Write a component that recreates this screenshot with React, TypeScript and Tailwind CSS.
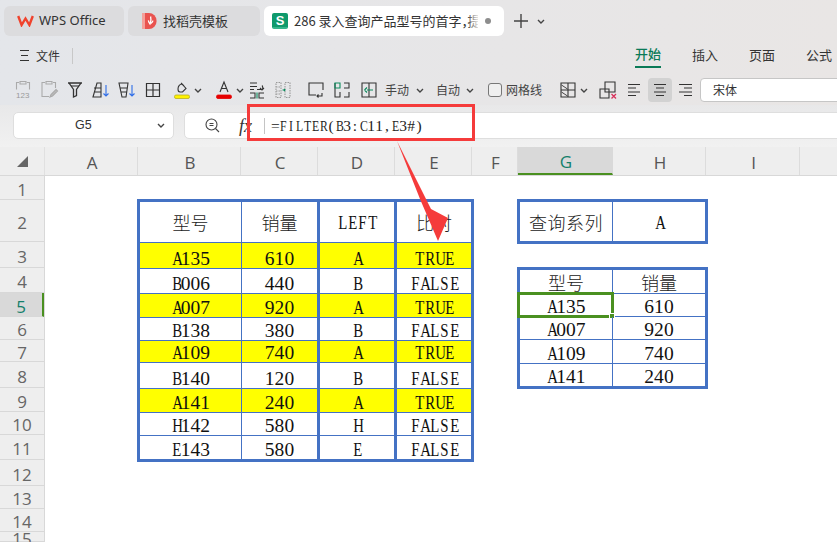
const cjk = { fontFamily: '"Noto Sans CJK SC", sans-serif' };

const columns = [
  { name: "A", width: 93 },
  { name: "B", width: 103 },
  { name: "C", width: 77 },
  { name: "D", width: 77 },
  { name: "E", width: 77 },
  { name: "F", width: 46 },
  { name: "G", width: 95, active: true },
  { name: "H", width: 93 },
  { name: "I", width: 94 },
  { name: "", width: 80 },
];

const rowHeights = [24, 42, 26, 25, 24, 23, 22, 26, 24, 23, 25, 26, 23, 23, 10];

const mainRows = [
  { h: 26, hit: true, cells: ["A135", "610", "A", "TRUE"] },
  { h: 25, hit: false, cells: ["B006", "440", "B", "FALSE"] },
  { h: 24, hit: true, cells: ["A007", "920", "A", "TRUE"] },
  { h: 23, hit: false, cells: ["B138", "380", "B", "FALSE"] },
  { h: 22, hit: true, cells: ["A109", "740", "A", "TRUE"] },
  { h: 26, hit: false, cells: ["B140", "120", "B", "FALSE"] },
  { h: 24, hit: true, cells: ["A141", "240", "A", "TRUE"] },
  { h: 23, hit: false, cells: ["H142", "580", "H", "FALSE"] },
  { h: 23, hit: false, cells: ["E143", "580", "E", "FALSE"] },
];

const resultRows = [
  { h: 23, cells: ["A135", "610"], selected: true },
  { h: 23, cells: ["A007", "920"] },
  { h: 24, cells: ["A109", "740"] },
  { h: 22, cells: ["A141", "240"] },
];

const mainCols = [
  "w-[102px] border-r border-[#4472c4]",
  "w-[78px] border-r-[3px] border-[#4472c4]",
  "w-[77px] border-r-[3px] border-[#4472c4]",
  "w-[74px]",
];

// the sheet font is half-width: every glyph sits in a fixed box, capitals squeezed to fit
function Fixed({ text, box }: { text: string; box: string }) {
  return (
    <span className="inline-flex font-['Liberation_Serif',serif] leading-none">
      {text.split("").map((ch, i) => (
        <span key={i} className={"inline-block text-center " + box + (/[A-Z]/.test(ch) ? " scale-x-[0.76]" : "")}>
          {ch}
        </span>
      ))}
    </span>
  );
}

function Latin({ children }: { children: string }) {
  return (
    <span className="text-[19.5px] leading-none text-[#111]">
      <Fixed text={children} box="w-[9.8px]" />
    </span>
  );
}

function Han({ children }: { children: string }) {
  return (
    <span style={cjk} className="text-[18px] font-light leading-none text-[#222]">
      {children}
    </span>
  );
}

function Icon({ children, className = "" }: { children: React.ReactNode; className?: string }) {
  return (
    <span className={"flex h-6 w-[26px] shrink-0 items-center justify-center " + className}>
      <svg width="20" height="20" viewBox="0 0 20 20" fill="none" stroke="#333" strokeWidth="1.1">
        {children}
      </svg>
    </span>
  );
}

function Chevron({ className = "" }: { className?: string }) {
  return (
    <span className={"flex w-[10px] shrink-0 justify-center " + className}>
      <svg width="8" height="5" viewBox="0 0 8 5" fill="none" stroke="#444" strokeWidth="1.4">
        <path d="M1 1l3 3 3-3" />
      </svg>
    </span>
  );
}

function Tab({ children, className }: { children: React.ReactNode; className: string }) {
  return <div className={"flex h-[30px] shrink-0 items-center rounded-[6px] " + className}>{children}</div>;
}

export default function App() {
  return (
    <div style={cjk} className="relative flex h-screen w-screen flex-col overflow-hidden bg-white">
      <div className="h-[105px] shrink-0 bg-gradient-to-r from-[#e4e6ea] to-[#e9e6e5]">
        {/* tabs */}
        <div className="flex h-[42px] items-start gap-1 pl-1 pt-[6px] text-[13px] text-[#333]">
          <Tab className="w-[120px] bg-[#dcdcde] pl-[13px]">
            <svg width="17" height="12" viewBox="0 0 17 12" fill="none" stroke="#f0432d" strokeWidth="2.4">
              <path d="M1.2 1l3.4 9 3.9-6.5 3.9 6.5 3.4-9" />
            </svg>
            <span className="ml-[5px] font-['Noto_Sans',sans-serif]">WPS Office</span>
          </Tab>
          <Tab className="w-[132px] bg-[#dcdcde] pl-[14px]">
            <svg width="15" height="16" viewBox="0 0 15 16">
              <path d="M0 0h7a7.6 8 0 0 1 0 16H0z" fill="#e9534f" />
              <path d="M0 0h3v16H0z" fill="#f4a09a" />
              <path d="M8.6 3.5c.8 2.4.4 4.6-.6 7.5-.9-1-1.7-2.5-1.5-3.7M8.8 10.5c1-.6 1.9-1.6 2.2-2.8" fill="none" stroke="#fff" strokeWidth="1.3" />
            </svg>
            <span className="ml-[6px]">找稻壳模板</span>
          </Tab>
          <Tab className="relative w-[240px] bg-white pl-2">
            <span className="relative flex h-4 w-4 shrink-0 items-center justify-center rounded-[2px] border-b-2 border-[#35b58b] bg-[#0f9a6c] font-['Liberation_Sans',sans-serif] text-[13px] font-bold leading-none text-white">
              S
            </span>
            <span className="ml-[6px] w-[184px] overflow-hidden whitespace-nowrap text-[13px]">
              286 录入查询产品型号的首字<span className="tracking-[-7px]">，</span>提
            </span>
            <span className="absolute left-[203px] top-0 h-full w-[13px] bg-gradient-to-r from-transparent to-white" />
            <span className="ml-[7px] h-[6px] w-[6px] rounded-full bg-[#8d8d8d]" />
          </Tab>
          <div className="ml-[6px] flex h-[30px] items-center">
            <svg width="14" height="14" viewBox="0 0 14 14" stroke="#444" strokeWidth="1.4">
              <path d="M7 0v14M0 7h14" />
            </svg>
            <Chevron className="ml-[8px]" />
          </div>
        </div>

        {/* menu row */}
        <div className="flex h-[33px] text-[13px] text-[#333]">
          <div className="flex h-[27px] items-center pl-[20px]">
            <svg width="9" height="11" viewBox="0 0 9 11" stroke="#333" strokeWidth="1">
              <path d="M0 .5h9M1 5.5h7M0 10.5h9" />
            </svg>
            <span className="ml-[7px] text-[12px]">文件</span>
            <span className="ml-3 h-4 w-px bg-[#c8c8c8]" />
          </div>
          <div className="ml-auto flex gap-[31px] pr-[5px]">
            <div className="flex h-[26px] flex-col items-center justify-center border-b-2 border-[#0a7a57] font-medium text-[#0a7a57]">
              开始
            </div>
            <div className="flex h-[26px] items-center">插入</div>
            <div className="flex h-[26px] items-center">页面</div>
            <div className="flex h-[26px] items-center">公式</div>
          </div>
        </div>

        {/* toolbar */}
        <div className="flex h-[30px] items-center pl-[10px] text-[12px] text-[#444]">
          <Icon>
            <g stroke="#aaa">
              <path d="M6 2.5H3.5v7M14 2.5h2.500v7M7 1.500h6v2.500H7z" />
              <text x="3" y="18" fontSize="8" fill="#999" stroke="none" fontFamily="Liberation Sans">123</text>
            </g>
          </Icon>
          <Icon>
            <g stroke="#aaa">
              <path d="M6 2.500H3v14h7M14 2.500h2.500V8M7 1.500h6v2.500H7z" />
              <path d="M11 17l1-2.500 5-5 1.500 1.500-5 5z" fill="#bbb" />
            </g>
          </Icon>
          <Icon>
            <path d="M3 3h14M4 3l4.500 6.500V17l3-1.500v-6L16 3" strokeWidth="1.3" />
            <path d="M6 6h8" />
          </Icon>
          <Icon>
            <path d="M2 17L6 3h4v14zM4 12h6M3 8h7" />
            <path d="M15 5v11M12.500 13.500L15 16l2.500-2.500" stroke="#2f6ee8" />
          </Icon>
          <Icon>
            <path d="M2 3h9L9 17H5zM3 8h7M4 12h6" />
            <path d="M15 5v11M12.500 13.500L15 16l2.500-2.500" stroke="#2f6ee8" />
          </Icon>
          <Icon>
            <path d="M3.500 3.500h13v13h-13zM10 3.500v13M3.500 10h13" strokeWidth="1.2" />
          </Icon>
          <Icon className="ml-[3px]">
            <path d="M6 9c0-3 2-5 4-5l4 4.500-3.500 3.500H8C6.500 12 6 10.500 6 9zM9 3l3 3" />
            <rect x="2.500" y="15" width="15" height="3.500" rx="1.500" fill="#fff200" stroke="#b9b020" strokeWidth=".8" />
          </Icon>
          <Chevron className="-ml-[2px]" />
          <Icon className="ml-[8px]">
            <path d="M6 12l4-10 4 10M7.500 8.500h5" />
            <rect x="2.500" y="15" width="15" height="3.500" rx="1.500" fill="#e60000" stroke="#e60000" strokeWidth=".8" />
          </Icon>
          <Chevron className="-ml-[2px]" />
          <Icon className="-ml-[1px]">
            <path d="M3 3h7M3 6.500h7M3 9.500h4M10 9.500h5c1 0 1-3 0-4M13 8l2 2 2-2" />
            <path d="M3 13h5v5H3M17 13h-5v5h5" />
            <path d="M10 12.500v6" stroke="#0a8a5c" />
          </Icon>
          <Icon>
            <g stroke="#999">
              <path d="M3 2.500h5v15H3zM12 2.500h5v15h-5zM3 7h5M3 11h5M3 14h5" strokeDasharray="1.500 1" />
            </g>
            <path d="M9.500 10h2M11 9l1 1-1 1" stroke="#0a8a5c" />
          </Icon>
          <Icon className="ml-[7px]">
            <path d="M17 10V3H3v12h7" />
            <path d="M16 13v3h-5M12.500 14.500L11 16l1.500 1.500" />
          </Icon>
          <Icon>
            <path d="M3 3v14h5v-5M12 3h5v5h-5M12 17h5v-5" />
            <path d="M3 3h5v5H3z" stroke="#0a8a5c" />
          </Icon>
          <Icon className="ml-[1px]">
            <path d="M3 3h14v14H3zM10 3v14" />
            <path d="M8 10h6M5.500 10L8 7.500M5.500 10L8 12.500" stroke="#0a8a5c" />
          </Icon>
          <span className="ml-[3px] whitespace-nowrap">手动</span>
          <Chevron className="ml-[6px]" />
          <span className="ml-[11px] whitespace-nowrap">自动</span>
          <Chevron className="ml-[5px]" />
          <span className="ml-[13px] h-[14px] w-[14px] shrink-0 rounded-[3px] border border-[#777] bg-[#efefef]" />
          <span className="ml-1 whitespace-nowrap">网格线</span>
          <Icon className="ml-[13px]">
            <path d="M3 3h14v14H3zM10 3v14M3 10h14" />
            <path d="M3.500 5l6 4M3.500 12l6 4" strokeWidth=".9" />
          </Icon>
          <Chevron className="-ml-[2px]" />
          <Icon className="ml-[6px]">
            <path d="M2 9h9v9H2zM7 2h10v10H7z" />
            <path d="M13.500 14l4.500 4.500M18 14l-4.500 4.500" stroke="#d8305a" strokeWidth="1.300" />
          </Icon>
          <span className="flex h-6 w-[26px] shrink-0 items-center justify-center">
            <svg width="12" height="12" viewBox="0 0 12 12" stroke="#333" strokeWidth="1.1">
              <path d="M0 .5h12M0 4h8M0 8h12M0 11.500h8" />
            </svg>
          </span>
          <span className="ml-px flex h-6 w-6 shrink-0 items-center justify-center rounded-[4px] bg-[#d2d2d2]">
            <svg width="14" height="12" viewBox="0 0 14 12" stroke="#333" strokeWidth="1.1">
              <path d="M1 .5h12M3 4h8M1 8h12M3 11.500h8" />
            </svg>
          </span>
          <span className="flex h-6 w-[26px] shrink-0 items-center justify-center">
            <svg width="13" height="12" viewBox="0 0 13 12" stroke="#333" strokeWidth="1.1">
              <path d="M0 .5h13M5 4h8M0 8h13M5 11.500h8" />
            </svg>
          </span>
          <div className="ml-[2px] flex h-6 w-[160px] shrink-0 items-center rounded-[4px] border border-[#c6c6c6] bg-white pl-3 text-[12px] text-[#333]">
            宋体
          </div>
        </div>
      </div>

      {/* formula bar */}
      <div className="flex h-[42px] shrink-0 items-start bg-gradient-to-b from-[#e8e8e9] to-[#f1f1f1] pl-[13px] pt-[7px]">
        <div className="flex h-[27px] w-[161px] shrink-0 items-center rounded-[5px] border border-[#dedede] bg-white pl-[61px] font-['Liberation_Sans',sans-serif] text-[12.500px] text-[#333]">
          <span className="w-[81px]">G5</span>
          <Chevron />
        </div>
        <div className="ml-[10px] flex h-[27px] w-[680px] shrink-0 items-center rounded-[5px] border border-[#dedede] bg-white pl-[20px]">
          <svg width="15" height="15" viewBox="0 0 15 15" fill="none" stroke="#444" strokeWidth="1.100">
            <circle cx="6.500" cy="6.500" r="5.500" />
            <path d="M10.500 10.500L14 14M4.500 5.500h4M4.500 7.500h4" />
          </svg>
          <span className="ml-[19px] font-['Liberation_Serif',serif] text-[18px] italic leading-none text-[#333]">fx</span>
          <span className="ml-[12px] h-4 w-px bg-[#c4c4c4]" />
          <span className="ml-[6px] text-[15.500px] leading-none text-[#222]">
            <Fixed text="=FILTER(B3:C11,E3#)" box="w-[8px]" />
          </span>
        </div>
      </div>

      {/* column headers */}
      <div className="flex h-[29px] shrink-0 border-b border-[#d8d8d8] bg-[#eeeeee] font-['Open_Sans',sans-serif] text-[17px] text-[#555]">
        <div className="flex w-[45px] shrink-0 items-center justify-center border-r border-[#e0e0e0]">
          <svg width="11" height="11" viewBox="0 0 11 11">
            <path d="M11 0v11H0z" fill="#666" />
          </svg>
        </div>
        {columns.map((c) => (
          <div
            key={c.name}
            style={{ width: c.width }}
            className={
              "flex shrink-0 items-center justify-center border-r pl-[2px] pt-1 " +
              (c.active
                ? "border-r-[#d9d9d9] border-b-2 border-b-[#4a9020] bg-[#d9d9d9] text-[#13806b]"
                : "border-[#dcdcdc]")
            }
          >
            {c.name}
          </div>
        ))}
      </div>

      <div className="flex min-h-0 flex-1">
        {/* row headers */}
        <div className="w-[45px] shrink-0 border-r border-[#d8d8d8] bg-[#eeeeee] font-['Open_Sans',sans-serif] text-[17px] text-[#666]">
          {rowHeights.map((h, i) => (
            <div
              key={i}
              style={{ height: h }}
              className={
                "flex items-center justify-center border-b border-[#d8d8d8] pt-1 " +
                (i === 4 ? "border-r-2 border-r-[#4a9020] bg-[#d9d9d9] text-[#13806b]" : "")
              }
            >
              {i + 1}
            </div>
          ))}
        </div>

        {/* sheet */}
        <div className="grid flex-1 grid-cols-[93px_103px_77px_77px_77px_46px_95px_93px_94px_1fr] grid-rows-[24px_42px_26px_25px_24px_23px_22px_26px_24px_23px_25px_26px_23px_23px_10px] bg-white">
          <div className="col-span-4 col-start-2 row-span-10 row-start-2 -ml-px -mt-px w-[337px] self-start justify-self-start border-[3px] border-[#4472c4]">
            <div className="flex h-[41px] border-b border-[#4472c4]">
              {["型号", "销量", "LEFT", "比对"].map((t, i) => (
                <div key={t} className={"flex items-center justify-center " + mainCols[i]}>
                  {t === "LEFT" ? <Latin>{t}</Latin> : <Han>{t}</Han>}
                </div>
              ))}
            </div>
            {mainRows.map((r, ri) => (
              <div
                key={ri}
                style={{ height: r.h }}
                className={"flex " + (ri < mainRows.length - 1 ? "border-b border-[#4472c4]" : "")}
              >
                {r.cells.map((t, i) => (
                  <div
                    key={i}
                    className={"flex items-end justify-center " + mainCols[i] + (r.hit ? " bg-[#ffff00]" : " bg-white")}
                  >
                    <Latin>{t}</Latin>
                  </div>
                ))}
              </div>
            ))}
          </div>

          <div className="col-span-2 col-start-7 row-start-2 -ml-px -mt-px flex h-[45px] w-[191px] self-start justify-self-start border-[3px] border-[#4472c4]">
            <div className="flex w-[93px] items-center justify-center border-r border-[#4472c4] tracking-[0.5px]">
              <Han>查询系列</Han>
            </div>
            <div className="flex w-[92px] items-center justify-center">
              <Latin>A</Latin>
            </div>
          </div>

          <div className="col-span-2 col-start-7 row-span-5 row-start-4 -ml-px -mt-px w-[191px] self-start justify-self-start border-[3px] border-[#4472c4]">
            <div className="flex h-[24px] border-b border-[#4472c4]">
              <div className="flex w-[93px] items-center justify-center border-r border-[#4472c4]">
                <Han>型号</Han>
              </div>
              <div className="flex w-[92px] items-center justify-center">
                <Han>销量</Han>
              </div>
            </div>
            {resultRows.map((r, ri) => (
              <div
                key={ri}
                style={{ height: r.h }}
                className={"flex " + (ri < resultRows.length - 1 ? "border-b border-[#4472c4]" : "")}
              >
                <div className="relative flex w-[93px] items-end justify-center border-r border-[#4472c4]">
                  <Latin>{r.cells[0]}</Latin>
                  {r.selected && (
                    <div className="absolute -left-[3px] -top-[2px] h-[26px] w-[97px] border-[3px] border-[#4a9020]">
                      <span className="absolute -bottom-[4px] -right-[4px] h-[6px] w-[6px] border border-white bg-[#4a9020]" />
                    </div>
                  )}
                </div>
                <div className="flex w-[92px] items-end justify-center">
                  <Latin>{r.cells[1]}</Latin>
                </div>
              </div>
            ))}
          </div>
        </div>
      </div>

      {/* red callout drawn on top of the screenshot */}
      <div className="pointer-events-none absolute left-[247px] top-[104px] h-[37px] w-[228px] border-[3px] border-[#f53b3b]" />
      <svg className="pointer-events-none absolute left-0 top-0" width="837" height="542" fill="#f53b3b">
        <polygon points="397,141 431,209 448,218 438,241 420,199" />
      </svg>
    </div>
  );
}
